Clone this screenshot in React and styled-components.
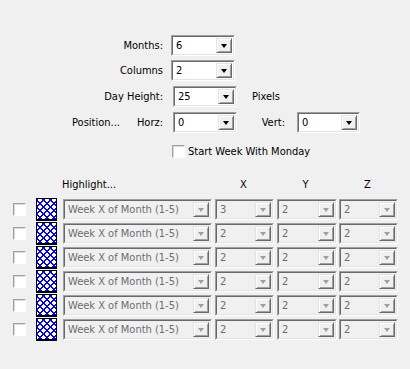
import React from 'react';
import styled, { createGlobalStyle } from 'styled-components';

const Global = createGlobalStyle`
  html, body { margin:0; padding:0; background:#f0f0f0; }
  body { font-family: "DejaVu Sans Condensed", "Liberation Sans", sans-serif; font-size:11px; color:#000; }
`;

const rows = [
  { x: '3', y: '2', z: '2' },
  { x: '2', y: '2', z: '2' },
  { x: '2', y: '2', z: '2' },
  { x: '2', y: '2', z: '2' },
  { x: '2', y: '2', z: '2' },
  { x: '2', y: '2', z: '2' },
];

const Combo = ({ value, width, disabled, ml }) => (
  <ComboOuter $w={width} $ml={ml}>
    <ComboInner $disabled={disabled}>
      <ComboText $disabled={disabled}>{value}</ComboText>
      <DropButton>
        <Arrow $disabled={disabled} />
      </DropButton>
    </ComboInner>
  </ComboOuter>
);

const Swatch = ({ id }) => (
  <SwatchBox>
    <svg width="21" height="23" viewBox="0 0 21 23">
      <defs>
        <clipPath id={id}>
          <rect x="1" y="1" width="19" height="20" />
        </clipPath>
      </defs>
      <rect x="0" y="0" width="21" height="23" fill="#000" />
      <rect x="1" y="1" width="19" height="20" fill="#fff" />
      <g clipPath={`url(#${id})`} stroke="#0000ff" strokeWidth="1" shapeRendering="crispEdges">
        {[-21, -14, -7, 0, 7, 14, 21].map((o) => (
          <React.Fragment key={o}>
            <line x1={o - 3.5} y1="-2" x2={o + 25.5} y2="27" />
            <line x1={o + 25.5} y1="-2" x2={o - 3.5} y2="27" />
          </React.Fragment>
        ))}
      </g>
    </svg>
  </SwatchBox>
);

export default function App() {
  return (
    <Page>
      <Global />
      <TopForm>
        <FormRow $mt={35}>
          <Label $w={163}>Months:</Label>
          <Combo value="6" width={64} ml={8} />
        </FormRow>
        <FormRow $mt={4}>
          <Label $w={163}>Columns</Label>
          <Combo value="2" width={64} ml={8} />
        </FormRow>
        <FormRow $mt={5}>
          <Label $w={163}>Day Height:</Label>
          <Combo value="25" width={64} ml={10} />
          <Plain $ml={15}>Pixels</Plain>
        </FormRow>
        <FormRow $mt={5}>
          <SplitLabel>
            <span>Position...</span>
            <span>Horz:</span>
          </SplitLabel>
          <Combo value="0" width={64} ml={10} />
          <Label $w={48}>Vert:</Label>
          <Combo value="0" width={63} ml={12} />
        </FormRow>
        <CheckRow>
          <CheckBox />
          <span>Start Week With Monday</span>
        </CheckRow>
      </TopForm>

      <Table>
        <HeaderRow>
          <Spacer $w={50} />
          <HeadCell $w={148} $left>Highlight...</HeadCell>
          <HeadCell $w={59} $ml={4}>X</HeadCell>
          <HeadCell $w={59} $ml={3}>Y</HeadCell>
          <HeadCell $w={59} $ml={3}>Z</HeadCell>
        </HeaderRow>
        {rows.map((r, i) => (
          <DataRow key={i}>
            <CheckBox />
            <Swatch id={`sw${i}`} />
            <Combo value="Week X of Month (1-5)" width={149} ml={6} disabled />
            <Combo value={r.x} width={59} ml={3} disabled />
            <Combo value={r.y} width={60} ml={3} disabled />
            <Combo value={r.z} width={59} ml={2} disabled />
          </DataRow>
        ))}
      </Table>
    </Page>
  );
}

const Page = styled.div`
  width:410px;
  height:369px;
  background:#f0f0f0;
  overflow:hidden;
`;

const TopForm = styled.div`
  display:flex;
  flex-direction:column;
`;

const FormRow = styled.div`
  display:flex;
  align-items:center;
  height:21px;
  margin-top:${(p) => p.$mt}px;
`;

const Label = styled.div`
  width:${(p) => p.$w}px;
  text-align:right;
  flex-shrink:0;
`;

const SplitLabel = styled.div`
  width:163px;
  padding-left:72px;
  box-sizing:border-box;
  display:flex;
  justify-content:space-between;
  flex-shrink:0;
`;

const Plain = styled.span`
  margin-left:${(p) => p.$ml}px;
`;

const CheckRow = styled.div`
  display:flex;
  align-items:center;
  gap:3px;
  margin-top:11px;
  padding-left:172px;
  height:15px;
`;

const CheckBox = styled.div`
  width:13px;
  height:13px;
  box-sizing:border-box;
  background:#fff;
  border:1px solid;
  border-color:#a0a0a0 #ffffff #ffffff #a0a0a0;
  box-shadow: inset 1px 1px 0 #dadada;
  flex-shrink:0;
`;

const ComboOuter = styled.div`
  width:${(p) => p.$w}px;
  height:21px;
  margin-left:${(p) => p.$ml || 0}px;
  box-sizing:border-box;
  border:1px solid;
  border-color:#a0a0a0 #ffffff #ffffff #a0a0a0;
  flex-shrink:0;
`;

const ComboInner = styled.div`
  height:100%;
  box-sizing:border-box;
  border:1px solid;
  border-color:#696969 #e3e3e3 #e3e3e3 #696969;
  background:${(p) => (p.$disabled ? '#f0f0f0' : '#ffffff')};
  display:flex;
  align-items:center;
  padding-right:1px;
`;

const ComboText = styled.span`
  flex:1;
  padding-left:3px;
  color:${(p) => (p.$disabled ? '#6d6d6d' : '#000')};
  white-space:nowrap;
  overflow:hidden;
`;

const DropButton = styled.div`
  width:16px;
  height:15px;
  box-sizing:border-box;
  background:#f0f0f0;
  border:1px solid;
  border-color:#e3e3e3 #696969 #696969 #e3e3e3;
  box-shadow: inset 1px 1px 0 #ffffff, inset -1px -1px 0 #a0a0a0;
  display:flex;
  align-items:center;
  justify-content:center;
`;

const Arrow = styled.div`
  width:0;
  height:0;
  margin-top:1px;
  border-left:3.5px solid transparent;
  border-right:3.5px solid transparent;
  border-top:4px solid ${(p) => (p.$disabled ? '#a0a0a0' : '#000')};
`;

const Table = styled.div`
  display:flex;
  flex-direction:column;
  gap:3px;
  margin-top:15px;
`;

const HeaderRow = styled.div`
  display:flex;
  align-items:center;
  height:20px;
  padding-left:12px;
  margin-bottom:2px;
`;

const Spacer = styled.div`
  width:${(p) => p.$w}px;
  flex-shrink:0;
`;

const HeadCell = styled.div`
  width:${(p) => p.$w}px;
  margin-left:${(p) => p.$ml || 0}px;
  text-align:${(p) => (p.$left ? 'left' : 'center')};
  flex-shrink:0;
`;

const DataRow = styled.div`
  display:flex;
  align-items:center;
  height:21px;
  padding-left:13px;
`;

const SwatchBox = styled.div`
  width:21px;
  height:23px;
  margin-left:10px;
  flex-shrink:0;
  line-height:0;
`;
